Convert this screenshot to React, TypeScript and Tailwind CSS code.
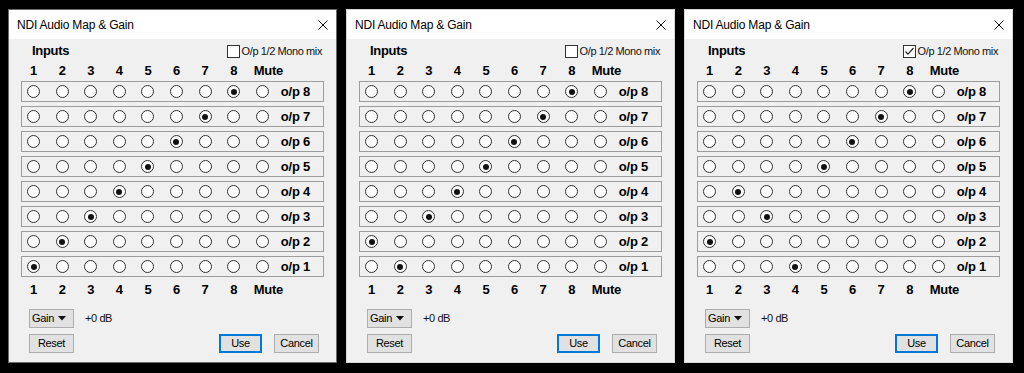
import React from 'react';

type DialogProps = { map: number[]; mono: boolean; first?: boolean };

const ui = { fontFamily: '"Liberation Sans", Arial, sans-serif' };
const gridCols = 'grid grid-cols-[repeat(8,28.6px)_25px_auto] items-center';

function Radio({ on }: { on: boolean }) {
  return (
    <span className="flex h-[13px] w-[13px] items-center justify-center rounded-full border border-[#333] bg-white">
      {on && <span className="h-[6px] w-[6px] rounded-full bg-[#111]" />}
    </span>
  );
}

function NumberRow() {
  return (
    <div className={`${gridCols} h-[16px] pl-[6px] text-[13px] font-bold leading-[16px] tracking-[-0.3px] text-black`}>
      {[1, 2, 3, 4, 5, 6, 7, 8].map((n) => (
        <span key={n} className="w-[13px] text-center">
          {n}
        </span>
      ))}
      <span className="-ml-[2px]">Mute</span>
    </div>
  );
}

function Button({ label, primary }: { label: string; primary?: boolean }) {
  return (
    <button
      type="button"
      className={
        primary
          ? 'flex h-[19px] w-[43px] items-center justify-center border-2 border-[#0078d7] bg-[#e1e1e1] text-[11px] tracking-[-0.3px] text-black'
          : 'flex h-[19px] w-[45px] items-center justify-center border border-[#adadad] bg-[#e1e1e1] text-[11px] tracking-[-0.3px] text-black'
      }
    >
      {label}
    </button>
  );
}

// map[i] = selected input column (1..9) for output 8 - i
function Dialog({ map, mono, first }: DialogProps) {
  return (
    <div
      className={`flex h-[354px] w-[329px] flex-col ${first ? 'border border-[#6b6b6b]' : 'border border-[#d8d8d8]'}`}
      style={ui}
    >
      <div className="flex h-[29px] items-center justify-between bg-white pl-[8px] pr-[7px]">
        <span className="text-[12px] tracking-[-0.2px] text-black">NDI Audio Map &amp; Gain</span>
        <svg width="10" height="10" viewBox="0 0 10 10" className="mr-[1px]">
          <path d="M0.5 0.5 L9.5 9.5 M9.5 0.5 L0.5 9.5" stroke="#111" strokeWidth="1" />
        </svg>
      </div>
      <div className="flex flex-1 flex-col bg-[#f0f0f0] px-[12px] pt-[4px]">
        <div className="flex h-[16px] items-center justify-between">
          <span className="ml-[11px] text-[13px] font-bold tracking-[-0.3px] text-black">Inputs</span>
          <span className="mr-[2px] flex items-center gap-[2px] text-[11px] tracking-[-0.4px] text-[#111]">
            <span className="flex h-[13px] w-[13px] items-center justify-center border border-[#333] bg-white">
              {mono && (
                <svg width="11" height="11" viewBox="0 0 11 11">
                  <path d="M1.5 5.5 L4 8.2 L9.5 2" fill="none" stroke="#222" strokeWidth="1.2" />
                </svg>
              )}
            </span>
            O/p 1/2 Mono mix
          </span>
        </div>
        <div className="mt-[4px]">
          <NumberRow />
        </div>
        <div className="mt-[2px] flex flex-col gap-[4px]">
          {map.map((sel, i) => (
            <div key={i} className={`${gridCols} h-[21px] border border-[#9c9c9c] pl-[5px]`}>
              {[1, 2, 3, 4, 5, 6, 7, 8, 9].map((c) => (
                <Radio key={c} on={c === sel} />
              ))}
              <span className="text-[13px] font-bold tracking-[-0.2px] text-black">o/p {8 - i}</span>
            </div>
          ))}
        </div>
        <div className="mt-[5px]">
          <NumberRow />
        </div>
        <div className="ml-[8px] mt-[11px] flex items-center gap-[11px]">
          <span className="flex h-[19px] w-[45px] items-center justify-between border border-[#adadad] bg-[#e1e1e1] pl-[2px] pr-[7px] text-[11px] tracking-[-0.3px] text-black">
            Gain
            <svg width="8" height="5" viewBox="0 0 8 5">
              <path d="M0 0 H8 L4 4.5 Z" fill="#111" />
            </svg>
          </span>
          <span className="text-[11px] tracking-[-0.4px] text-[#111]">+0 dB</span>
        </div>
        <div className="mt-[6px] flex items-center pl-[8px] pr-[5px]">
          <Button label="Reset" />
          <div className="ml-auto flex gap-[12px]">
            <Button label="Use" primary />
            <Button label="Cancel" />
          </div>
        </div>
      </div>
    </div>
  );
}

export default function App() {
  return (
    <div className="flex h-[373px] w-[1024px] gap-[9px] bg-black pl-[8px] pt-[9px]">
      <Dialog first mono={false} map={[8, 7, 6, 5, 4, 3, 2, 1]} />
      <Dialog mono={false} map={[8, 7, 6, 5, 4, 3, 1, 2]} />
      <Dialog mono map={[8, 7, 6, 5, 2, 3, 1, 4]} />
    </div>
  );
}
